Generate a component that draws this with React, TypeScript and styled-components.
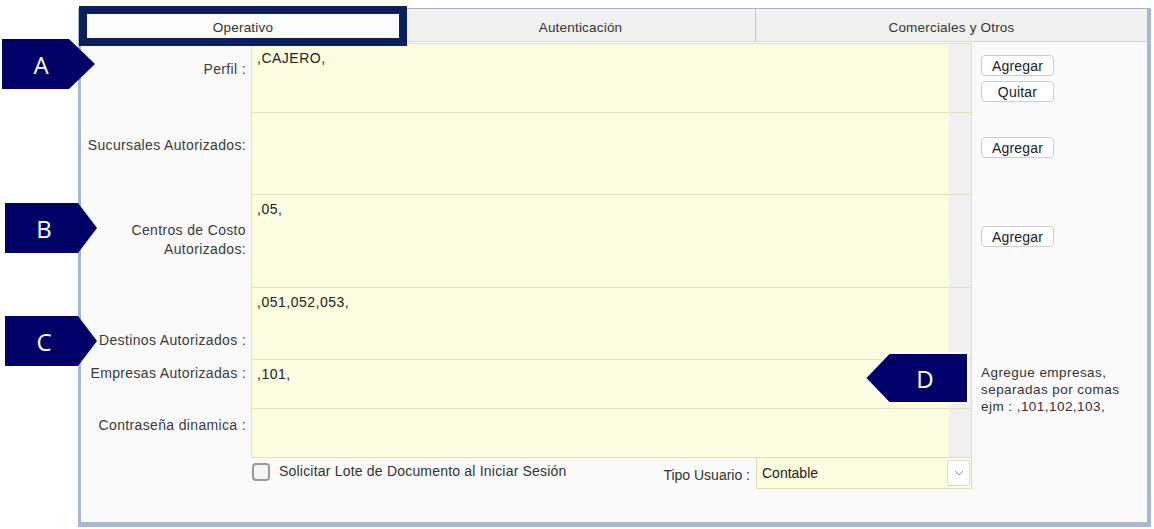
import React from 'react';
import styled, { createGlobalStyle } from 'styled-components';

const GlobalStyle = createGlobalStyle`
  html, body {
    margin: 0;
    padding: 0;
    background: #ffffff;
  }
  body {
    font-family: "Liberation Sans", Arial, sans-serif;
    color: #333;
  }
`;

const Page = styled.div`
  position: relative;
  width: 1154px;
  height: 529px;
  padding: 8px 3px 2px 78px;
  box-sizing: border-box;
`;

const Frame = styled.div`
  height: 100%;
  box-sizing: border-box;
  border: 3px solid #a8b7d3;
  border-top: 1px solid #aab4c6;
  border-right-width: 4px;
  border-bottom-width: 5px;
  background: #fafafa;
  display: flex;
  flex-direction: column;
`;

const TabBar = styled.div`
  display: flex;
  height: 33px;
  box-sizing: border-box;
  border-bottom: 1px solid #d6d9df;
`;

const Tab = styled.div<{ $w: number; $active?: boolean }>`
  width: ${(p) => p.$w}px;
  box-sizing: border-box;
  display: flex;
  align-items: center;
  justify-content: center;
  padding-top: 4px;
  font-size: 13.5px;
  letter-spacing: 0.2px;
  color: #333;
  background: ${(p) => (p.$active ? '#fbfbfb' : '#f1f1f1')};
  border-right: 1px solid #b9c5da;

  &:last-child {
    border-right: none;
  }
`;

const Body = styled.div`
  padding-top: 1px;
  display: flex;
  flex-direction: column;
`;

const FieldRow = styled.div<{ $h: number }>`
  display: grid;
  grid-template-columns: 170px 721px 1fr;
  height: ${(p) => p.$h}px;
`;

const FieldLabel = styled.div<{ $pt: number; $lh?: number }>`
  padding: ${(p) => p.$pt}px 5px 0 0;
  text-align: right;
  font-size: 14px;
  letter-spacing: 0.35px;
  line-height: ${(p) => p.$lh ?? 16}px;
  color: #3a3a3a;
`;

const FieldBox = styled.div<{ $last?: boolean }>`
  display: grid;
  grid-template-columns: 1fr 22px;
  box-sizing: border-box;
  border-left: 1px solid #e2e2b6;
  border-right: 1px solid #e2e2b6;
  border-top: 1px solid #e2e2b6;
  border-bottom: ${(p) => (p.$last ? '1px solid #e2e2b6' : 'none')};
  height: ${(p) => (p.$last ? 'calc(100% + 1px)' : '100%')};
`;

const FieldText = styled.div`
  background: #fcfce1;
  padding: 6px 5px 0;
  font-size: 14px;
  letter-spacing: 0.5px;
  line-height: 16px;
  color: #222;
`;

const ScrollStrip = styled.div`
  background: #f0f0f0;
`;

const SideCell = styled.div<{ $pt: number }>`
  padding: ${(p) => p.$pt}px 0 0 9px;
  display: flex;
  flex-direction: column;
  align-items: flex-start;
  gap: 5px;
`;

const SmallButton = styled.button`
  width: 73px;
  height: 21px;
  padding: 0;
  background: #ffffff;
  border: 1px solid #cdcdcd;
  border-radius: 4px;
  font-family: inherit;
  font-size: 14px;
  letter-spacing: 0.2px;
  color: #222;
`;

const HelpText = styled.div`
  font-size: 13.5px;
  letter-spacing: 0.45px;
  line-height: 17px;
  color: #333;
  white-space: nowrap;
`;

const FooterRow = styled.div`
  display: grid;
  grid-template-columns: 170px 721px 1fr;
  height: 33px;
`;

const FooterMain = styled.div`
  display: flex;
  align-items: stretch;
  padding-left: 1px;
`;

const CheckGroup = styled.label`
  display: flex;
  align-items: flex-start;
  gap: 9px;
  padding-top: 6px;
  font-size: 14px;
  letter-spacing: 0.2px;
  color: #333;
  flex: 1;
`;

const CheckBox = styled.span`
  width: 18px;
  height: 18px;
  box-sizing: border-box;
  border: 2px solid #9a9a9a;
  border-radius: 4px;
  background: #f5f5f5;
`;

const CheckText = styled.span`
  line-height: 16px;
`;

const TypeLabel = styled.span`
  align-self: center;
  padding: 0 6px 0 0;
  margin-top: 2px;
  font-size: 14px;
  color: #333;
`;

const SelectBox = styled.div`
  width: 216px;
  height: 32px;
  box-sizing: border-box;
  border: 1px solid #dedeb6;
  background: #fcfce1;
  display: flex;
  align-items: center;
  justify-content: space-between;
  padding: 0 1px 0 5px;
  font-size: 14px;
  color: #222;
`;

const SelectButton = styled.span`
  width: 23px;
  height: 26px;
  box-sizing: border-box;
  border: 1px solid #dadada;
  border-radius: 2px;
  background: #ffffff;
  display: flex;
  align-items: center;
  justify-content: center;
`;

const Highlight = styled.div`
  position: absolute;
  left: 79px;
  top: 6px;
  width: 328px;
  height: 40px;
  box-sizing: border-box;
  border: 8px solid #0b1f5b;
  pointer-events: none;
`;

const TagBox = styled.div<{ $x: number; $y: number; $w: number }>`
  position: absolute;
  left: ${(p) => p.$x}px;
  top: ${(p) => p.$y}px;
  width: ${(p) => p.$w}px;
  height: 50px;

  svg {
    position: absolute;
    inset: 0;
    overflow: visible;
  }
`;

const TagLetter = styled.span<{ $cx: number }>`
  position: absolute;
  left: ${(p) => p.$cx}px;
  top: 50%;
  transform: translate(-50%, -50%);
  font-family: "Open Sans", "Liberation Sans", sans-serif;
  font-size: 24px;
  color: #ffffff;
`;

type TagProps = {
  x: number;
  y: number;
  w: number;
  slant: number;
  letter: string;
  cx: number;
  left?: boolean;
};

// navy callout tag with a pointed end, pointing right unless `left`
const Tag = ({ x, y, w, slant, letter, cx, left }: TagProps) => {
  const pts = left
    ? `0,25 ${slant},0 ${w},0 ${w},50 ${slant},50`
    : `0,0 ${w - slant},0 ${w},25 ${w - slant},50 0,50`;
  return (
    <TagBox $x={x} $y={y} $w={w}>
      <svg width={w} height={50} viewBox={`0 0 ${w} 50`}>
        <polygon points={pts} fill="#000066" stroke="#ffffff" strokeWidth={left ? 2 : 0} />
      </svg>
      <TagLetter $cx={cx}>{letter}</TagLetter>
    </TagBox>
  );
};

const Chevron = () => (
  <svg width="10" height="6" viewBox="0 0 10 6">
    <polyline points="1,1 5,5 9,1" fill="none" stroke="#9a9a9a" strokeWidth="1" />
  </svg>
);

type Row = {
  label: React.ReactNode;
  value: string;
  h: number;
  pt: number;
  lh?: number;
  side?: React.ReactNode;
  sidePt?: number;
};

const rows: Row[] = [
  {
    label: 'Perfil :',
    value: ',CAJERO,',
    h: 69,
    pt: 18,
    sidePt: 12,
    side: (
      <>
        <SmallButton>Agregar</SmallButton>
        <SmallButton>Quitar</SmallButton>
      </>
    ),
  },
  {
    label: 'Sucursales Autorizados:',
    value: '',
    h: 82,
    pt: 25,
    sidePt: 25,
    side: <SmallButton>Agregar</SmallButton>,
  },
  {
    label: (
      <>
        Centros de Costo
        <br />
        Autorizados:
      </>
    ),
    value: ',05,',
    h: 93,
    pt: 27,
    lh: 19,
    sidePt: 32,
    side: <SmallButton>Agregar</SmallButton>,
  },
  { label: 'Destinos Autorizados :', value: ',051,052,053,', h: 72, pt: 45 },
  {
    label: 'Empresas Autorizadas :',
    value: ',101,',
    h: 49,
    pt: 6,
    sidePt: 5,
    side: (
      <HelpText>
        Agregue empresas,
        <br />
        separadas por comas
        <br />
        ejm : ,101,102,103,
      </HelpText>
    ),
  },
  { label: 'Contraseña dinamica :', value: '', h: 49, pt: 9 },
];

const App: React.FC = () => {
  return (
    <Page>
      <GlobalStyle />
      <Frame>
        <TabBar>
          <Tab $w={325} $active>
            Operativo
          </Tab>
          <Tab $w={350}>Autenticación</Tab>
          <Tab $w={391}>Comerciales y Otros</Tab>
        </TabBar>
        <Body>
          {rows.map((row, i) => (
            <FieldRow key={i} $h={row.h}>
              <FieldLabel $pt={row.pt} $lh={row.lh}>
                {row.label}
              </FieldLabel>
              <FieldBox $last={i === rows.length - 1}>
                <FieldText>{row.value}</FieldText>
                <ScrollStrip />
              </FieldBox>
              <SideCell $pt={row.sidePt ?? 0}>{row.side}</SideCell>
            </FieldRow>
          ))}
          <FooterRow>
            <div />
            <FooterMain>
              <CheckGroup>
                <CheckBox />
                <CheckText>Solicitar Lote de Documento al Iniciar Sesión</CheckText>
              </CheckGroup>
              <TypeLabel>Tipo Usuario :</TypeLabel>
              <SelectBox>
                <span>Contable</span>
                <SelectButton>
                  <Chevron />
                </SelectButton>
              </SelectBox>
            </FooterMain>
            <div />
          </FooterRow>
        </Body>
      </Frame>

      <Highlight />
      <Tag x={2} y={39} w={93} slant={26} letter="A" cx={39} />
      <Tag x={5} y={203} w={92} slant={19} letter="B" cx={39} />
      <Tag x={5} y={316} w={92} slant={19} letter="C" cx={39} />
      <Tag x={865} y={353} w={103} slant={24} letter="D" cx={60} left />
    </Page>
  );
};

export default App;
